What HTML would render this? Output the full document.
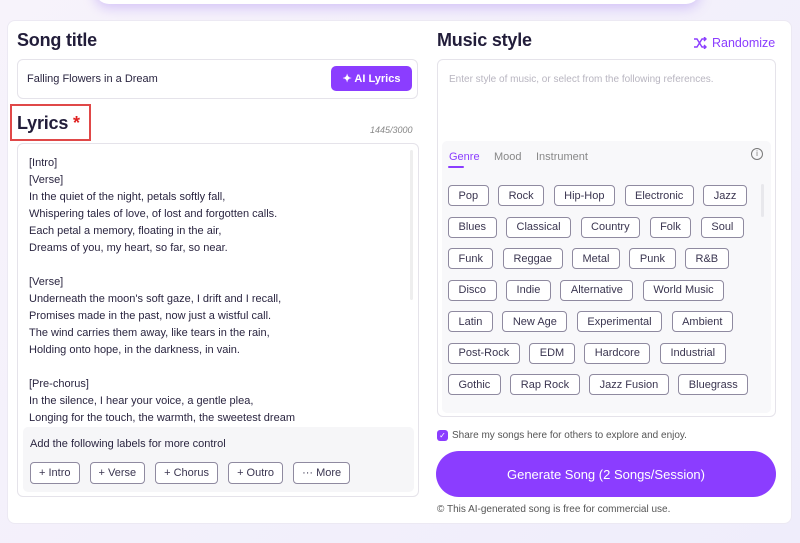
<!DOCTYPE html>
<html><head><meta charset="utf-8"><style>
*{box-sizing:border-box;margin:0;padding:0}
body{width:800px;height:543px;overflow:hidden;background:linear-gradient(135deg,#f7f3fb,#efedfb);font-family:"Liberation Sans",sans-serif;color:#2a2540;position:relative}
.abs{position:absolute}
.topcard{left:95px;top:-20px;width:605px;height:24px;background:#fff;border-radius:0 0 14px 14px;box-shadow:0 4px 12px rgba(150,110,240,.35)}
.main{left:7px;top:20px;width:785px;height:504px;background:#fff;border-radius:8px;border:1px solid #ece9f3}
h2{font-size:18px;font-weight:bold;color:#221d3a;letter-spacing:-.2px}
.box{border:1px solid #e5e3ea;border-radius:6px;background:#fff}
.btn{background:#8b3dff;color:#fff;border-radius:5px;font-size:11px;display:flex;align-items:center;justify-content:center;font-weight:bold}
.lyr{font-size:11px;line-height:17px;color:#2a2540}
.lab{border:1px solid #8f8aa0;border-radius:4px;height:22px;font-size:11px;display:inline-flex;align-items:center;padding:0 8px;margin-right:10px;background:#fff;color:#3a3550}
.chips{display:flex;flex-wrap:wrap;gap:10.5px 9.5px;width:310px}
.chip{border:1px solid #8f8aa0;border-radius:4px;height:21px;font-size:11px;display:inline-flex;align-items:center;padding:0 9.5px;background:#fff;color:#3a3550}
</style></head><body>
<div class="abs topcard"></div>
<div class="abs main"></div>

<h2 class="abs" style="left:17px;top:30px">Song title</h2>
<div class="abs box" style="left:17px;top:59px;width:401px;height:40px"></div>
<div class="abs" style="left:27px;top:73px;font-size:11px;color:#2a2540">Falling Flowers in a Dream</div>
<div class="abs btn" style="left:331px;top:66px;width:81px;height:25px">✦ AI Lyrics</div>

<div class="abs" style="left:10px;top:104px;width:81px;height:37px;border:2px solid #e04848"></div>
<h2 class="abs" style="left:17px;top:113px">Lyrics <span style="color:#e02020">*</span></h2>
<div class="abs" style="left:370px;top:125px;font-size:9px;font-style:italic;color:#888">1445/3000</div>

<div class="abs box" style="left:17px;top:143px;width:402px;height:354px;overflow:hidden">
<div class="lyr" style="position:absolute;left:11px;top:11px">
[Intro]<br>[Verse]<br>In the quiet of the night, petals softly fall,<br>Whispering tales of love, of lost and forgotten calls.<br>Each petal a memory, floating in the air,<br>Dreams of you, my heart, so far, so near.<br><br>[Verse]<br>Underneath the moon's soft gaze, I drift and I recall,<br>Promises made in the past, now just a wistful call.<br>The wind carries them away, like tears in the rain,<br>Holding onto hope, in the darkness, in vain.<br><br>[Pre-chorus]<br>In the silence, I hear your voice, a gentle plea,<br>Longing for the touch, the warmth, the sweetest dream
</div>
<div style="position:absolute;right:5px;top:6px;width:3px;height:150px;background:#eee;border-radius:2px"></div>
<div style="position:absolute;left:5px;top:283px;width:391px;height:65px;background:#f6f6f8;border-radius:5px">
<div style="position:absolute;left:7px;top:11px;font-size:11px">Add the following labels for more control</div>
<div style="position:absolute;left:7px;top:35px;display:flex">
<span class="lab">+ Intro</span><span class="lab">+ Verse</span><span class="lab">+ Chorus</span><span class="lab">+ Outro</span><span class="lab">··· More</span>
</div></div>
</div>

<h2 class="abs" style="left:437px;top:30px">Music style</h2>
<div class="abs" style="left:693px;top:36px;font-size:12.5px;color:#8b3dff;display:flex;align-items:center;gap:5px">
<svg width="14" height="12" viewBox="0 0 14 12" fill="none" stroke="#8b3dff" stroke-width="1.4"><path d="M1 2h3l5 8h4M1 10h3l5-8h4M11 0l2 2-2 2M11 8l2 2-2 2"/></svg>Randomize</div>
<div class="abs box" style="left:437px;top:59px;width:339px;height:358px"></div>
<div class="abs" style="left:449px;top:74px;font-size:10px;color:#b8b5c0">Enter style of music, or select from the following references.</div>
<div class="abs" style="left:442px;top:141px;width:329px;height:272px;background:#f8f8fa;border-radius:5px"></div>
<div class="abs" style="left:449px;top:151px;font-size:11px;color:#8b3dff">Genre</div>
<div class="abs" style="left:448px;top:166px;width:16px;height:2px;background:#8b3dff;border-radius:1px"></div>
<div class="abs" style="left:494px;top:151px;font-size:11px;color:#888">Mood</div>
<div class="abs" style="left:536px;top:151px;font-size:11px;color:#888">Instrument</div>
<div class="abs" style="left:751px;top:148px;width:12px;height:12px;border:1px solid #777;border-radius:50%;font-size:8px;color:#777;text-align:center;line-height:10px">i</div>
<div class="abs" style="left:761px;top:184px;width:3px;height:33px;background:#e8e8ec;border-radius:2px"></div>
<div class="abs chips" style="left:448px;top:185px">
<span class="chip">Pop</span><span class="chip">Rock</span><span class="chip">Hip-Hop</span><span class="chip">Electronic</span><span class="chip">Jazz</span>
<span class="chip">Blues</span><span class="chip">Classical</span><span class="chip">Country</span><span class="chip">Folk</span><span class="chip">Soul</span>
<span class="chip">Funk</span><span class="chip">Reggae</span><span class="chip">Metal</span><span class="chip">Punk</span><span class="chip">R&amp;B</span>
<span class="chip">Disco</span><span class="chip">Indie</span><span class="chip">Alternative</span><span class="chip">World Music</span>
<span class="chip">Latin</span><span class="chip">New Age</span><span class="chip">Experimental</span><span class="chip">Ambient</span>
<span class="chip">Post-Rock</span><span class="chip">EDM</span><span class="chip">Hardcore</span><span class="chip">Industrial</span>
<span class="chip">Gothic</span><span class="chip">Rap Rock</span><span class="chip">Jazz Fusion</span><span class="chip">Bluegrass</span>
</div>

<div class="abs" style="left:437px;top:430px;width:11px;height:11px;background:#8b3dff;border-radius:3px;color:#fff;font-size:8px;text-align:center;line-height:11px">✓</div>
<div class="abs" style="left:452px;top:430px;font-size:10px;color:#555">Share my songs here for others to explore and enjoy.</div>
<div class="abs btn" style="left:436px;top:451px;width:340px;height:46px;border-radius:23px;font-size:13px;font-weight:normal">Generate Song (2 Songs/Session)</div>
<div class="abs" style="left:437px;top:504px;font-size:10px;color:#555">© This AI-generated song is free for commercial use.</div>
</body></html>
